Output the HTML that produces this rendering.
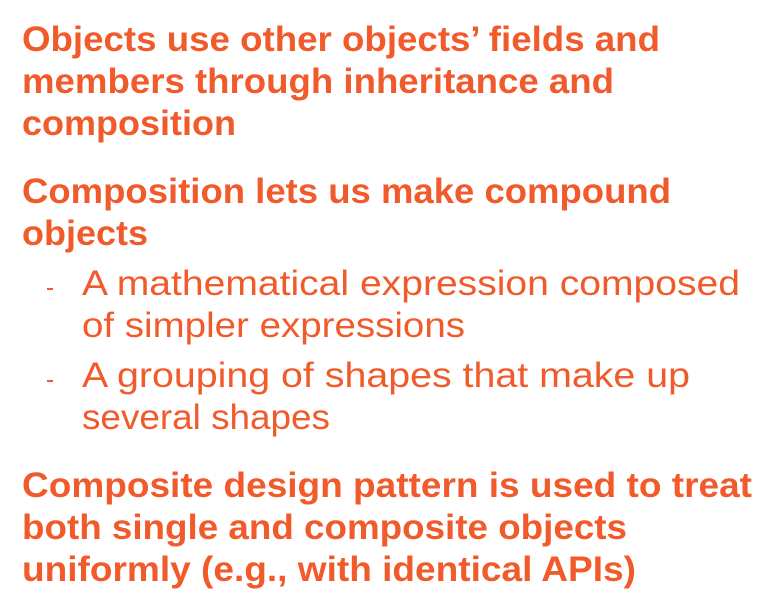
<!DOCTYPE html>
<html><head><meta charset="utf-8"><style>
html,body{margin:0;padding:0;background:#fff;width:772px;height:616px;overflow:hidden}
.l{position:absolute;white-space:nowrap;font-family:"Liberation Sans",sans-serif;color:#F15A2B;font-size:35px;line-height:35px;height:35px;transform-origin:0 0}
.b{font-weight:bold}
.n{font-weight:normal}
.d{position:absolute;left:47px;width:6px;height:2px;background:#F15A2B}
</style></head><body>
<div class="l b" style="left:22px;top:22px" data-w="638">Objects use other objects’ fields and</div>
<div class="l b" style="left:22px;top:64px" data-w="592">members through inheritance and</div>
<div class="l b" style="left:22px;top:106px" data-w="214">composition</div>
<div class="l b" style="left:22px;top:174px" data-w="649">Composition lets us make compound</div>
<div class="l b" style="left:22px;top:216px" data-w="126">objects</div>
<div class="d" style="top:288px"></div>
<div class="l n" style="left:82px;top:266px" data-w="658">A mathematical expression composed</div>
<div class="l n" style="left:82px;top:308px" data-w="383">of simpler expressions</div>
<div class="d" style="top:380px"></div>
<div class="l n" style="left:82px;top:358px" data-w="608">A grouping of shapes that make up</div>
<div class="l n" style="left:82px;top:400px" data-w="248">several shapes</div>
<div class="l b" style="left:22px;top:468px" data-w="730">Composite design pattern is used to treat</div>
<div class="l b" style="left:22px;top:510px" data-w="605">both single and composite objects</div>
<div class="l b" style="left:22px;top:552px" data-w="614">uniformly (e.g., with identical APIs)</div>
<script>
document.querySelectorAll('.l').forEach(function(e){var w=+e.getAttribute('data-w');var a=e.getBoundingClientRect().width;if(a>0)e.style.transform='scaleX('+(w/a)+')';});
</script>
</body></html>
